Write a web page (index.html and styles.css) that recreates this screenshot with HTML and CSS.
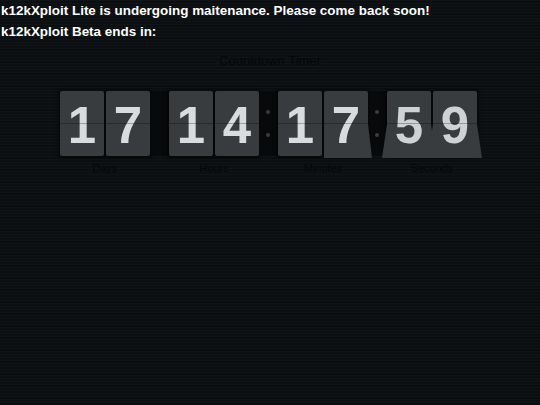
FILE: index.html
```html
<!DOCTYPE html>
<html>
<head>
<meta charset="utf-8">
<link rel="stylesheet" href="styles.css">
</head>
<body>
<div class="notice">
  <p>k12kXploit Lite is undergoing maitenance. Please come back soon!</p>
  <p>k12kXploit Beta ends in:</p>
</div>
<div class="timer">
  <div class="title">Countdown Timer</div>
  <div class="row">
    <div class="group">
      <div class="cards">
        <div class="card"><span>1</span></div>
        <div class="card"><span>7</span></div>
      </div>
      <div class="label">Days</div>
    </div>
    <div class="sep"></div>
    <div class="group">
      <div class="cards">
        <div class="card"><span>1</span></div>
        <div class="card"><span>4</span></div>
      </div>
      <div class="label">Hours</div>
    </div>
    <div class="sep"><i></i><i></i></div>
    <div class="group">
      <div class="cards">
        <div class="card"><span>1</span></div>
        <div class="card flip-right"><span>7</span></div>
      </div>
      <div class="label">Minutes</div>
    </div>
    <div class="sep"><i></i><i></i></div>
    <div class="group">
      <div class="cards">
        <div class="card flip"><span>5</span></div>
        <div class="card flip"><span>9</span></div>
      </div>
      <div class="label">Seconds</div>
    </div>
  </div>
</div>
</body>
</html>
```
FILE: styles.css
```css
html, body {
  margin: 0;
  padding: 0;
}
body {
  width: 540px;
  height: 405px;
  background-color: #0f1214;
  background-image: repeating-linear-gradient(to bottom, #111416 0, #111416 1px, #0c0f11 1px, #0c0f11 3px);
  font-family: "Liberation Sans", Arial, sans-serif;
  overflow: hidden;
}
.notice {
  padding-left: 1px;
}
.notice p {
  margin: 0;
  color: #ffffff;
  font-weight: bold;
  font-size: 13.45px;
  line-height: 21px;
}
.timer {
  display: flex;
  flex-direction: column;
  align-items: center;
}
.title {
  margin-top: 11px;
  font-size: 13px;
  line-height: 16px;
  color: #050607;
}
.row {
  margin-top: 22px;
  display: flex;
  padding-right: 3px;
}
.group {
  display: flex;
  flex-direction: column;
  align-items: center;
}
.cards {
  display: flex;
  gap: 2px;
  box-shadow: 0 0 4px 2px rgba(0,0,0,0.45);
  background: #08090a;
}
.card {
  position: relative;
  width: 44px;
  height: 65px;
  background: #393c3e;
  border-radius: 2px;
  box-shadow: 0 1px 2px rgba(0,0,0,0.6);
  display: flex;
  justify-content: center;
  align-items: center;
}
.card span {
  position: relative;
  z-index: 2;
  font-weight: bold;
  font-size: 51px;
  line-height: 65px;
  color: #d9dcdd;
  padding-top: 4px;
}
.card::after {
  content: "";
  position: absolute;
  left: 0;
  right: 0;
  top: 32px;
  height: 1px;
  background: rgba(0,0,0,0.28);
  z-index: 3;
}
.card.flip::before,
.card.flip-right::before {
  content: "";
  position: absolute;
  top: 33px;
  bottom: -2px;
  background: #393c3e;
  z-index: 1;
}
.card.flip::before {
  left: -5px;
  right: -5px;
  clip-path: polygon(5px 0, calc(100% - 5px) 0, 100% 100%, 0 100%);
}
.card.flip-right::before {
  left: 0;
  right: -4px;
  clip-path: polygon(0 0, calc(100% - 4px) 0, 100% 100%, 0 100%);
}
.card.flip span {
  color: #cfd2d3;
}
.sep {
  width: 19px;
  height: 65px;
  background: #08090a;
  display: flex;
  flex-direction: column;
  align-items: center;
  justify-content: center;
  gap: 19px;
  padding-right: 1px;
  box-sizing: border-box;
}
.sep i {
  display: block;
  width: 4px;
  height: 4px;
  border-radius: 50%;
  background: #3a3d3f;
}
.label {
  margin-top: 5px;
  font-size: 11px;
  line-height: 14px;
  color: #050607;
}
```
